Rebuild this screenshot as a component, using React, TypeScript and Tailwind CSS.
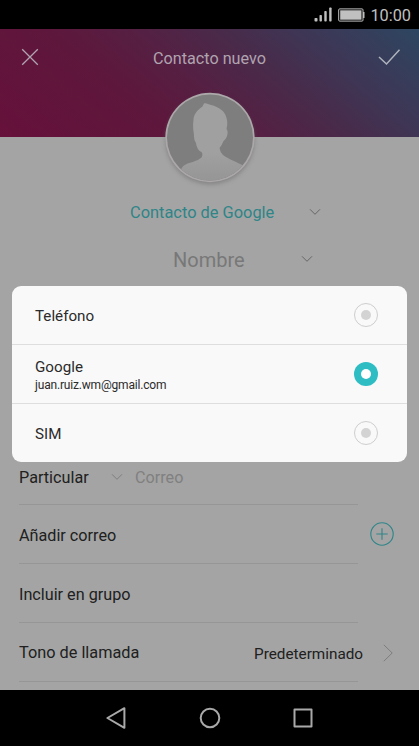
import React from "react";

function Chevron({ className = "" }: { className?: string }) {
  return (
    <svg className={className} width="12" height="8" viewBox="0 0 12 8" fill="none" stroke="currentColor" strokeWidth="1">
      <path d="M1 1.3 6 6.3l5-5" />
    </svg>
  );
}

function StatusBar() {
  return (
    <div className="flex h-[29px] shrink-0 items-center justify-end bg-black pr-2 text-[#c0c0c0]">
      <svg width="18" height="15" viewBox="0 0 18 15" fill="currentColor" className="mr-[6px]">
        <rect x="0.5" y="11" width="3" height="3.5" rx=".8" />
        <rect x="5.5" y="8" width="2.4" height="6.5" rx=".8" />
        <rect x="10.3" y="4" width="2.4" height="10.5" rx=".8" />
        <rect x="15.2" y="0.5" width="2.4" height="14" rx=".8" />
      </svg>
      <svg width="27" height="14" viewBox="0 0 27 14" className="mr-[5px]">
        <rect x="0.7" y="0.9" width="24.3" height="12.2" rx="1" fill="none" stroke="#c0c0c0" strokeWidth="1" />
        <rect x="2.2" y="2.3" width="21.3" height="9.4" fill="#c0c0c0" />
        <path d="M25 4h1.5v6H25z" fill="#c0c0c0" />
      </svg>
      <span className="pt-[2px] text-[16.300px] leading-5">10:00</span>
    </div>
  );
}

function Avatar() {
  return (
    <svg width="104" height="104" viewBox="0 0 104 104" className="absolute top-[56px] left-[158px]">
      <defs>
        <clipPath id="face"><circle cx="52" cy="52.5" r="43" /></clipPath>
        <filter id="shade" x="-20%" y="-20%" width="140%" height="140%"><feGaussianBlur stdDeviation="2.2" /></filter>
        <linearGradient id="person" x1="0" y1="0" x2="0" y2="1">
          <stop offset=".6" stopColor="#a0a0a0" /><stop offset="1" stopColor="#949494" />
        </linearGradient>
      </defs>
      <circle cx="52" cy="55" r="44.5" fill="#666" opacity=".5" filter="url(#shade)" />
      <circle cx="52" cy="52.5" r="44.7" fill="#aca8aa" />
      <circle cx="52" cy="52.5" r="43" fill="#7e7e7e" />
      <path clipPath="url(#face)" fill="url(#person)" d="M23 84.5C25 80 28 79 33 77.500C38 76 43 74 44 71.500Q45 69 43.500 67C40.500 66 38.500 62 38 58Q35.500 54 36 50Q34.500 42 35.500 35C35.500 30 39 25 44.500 21.500L46 18.500C48 17.500 50 19 53 20C61 22 67 26 68.500 33Q70 38 68.500 44Q70.500 46 69 51C68 54 66.500 55 65.500 56Q64 60 61.500 63Q62 67 65 70C70 74 79 77 86 81V100H23Z" />
    </svg>
  );
}

function Header() {
  return (
    <header className="relative z-10 flex h-[108px] shrink-0 items-start justify-between bg-[linear-gradient(40deg,#66113b_0%,#5e173c_32%,#552043_48%,#4a2949_62%,#3e3655_78%,#2d4661_100%)] text-[#b0a4b0]">
      <svg width="18" height="18" viewBox="0 0 18 18" fill="none" stroke="currentColor" strokeWidth="1.3" className="mt-[19px] ml-[21px]">
        <path d="m1.200 1.200 15.600 15.600M16.800 1.200 1.200 16.800" />
      </svg>
      <h1 className="mt-[18px] ml-[2px] text-[16.200px] leading-6">Contacto nuevo</h1>
      <svg width="23" height="18" viewBox="0 0 23 18" fill="none" stroke="#b0b4bc" strokeWidth="1.5" className="mt-[20px] mr-[18px]">
        <path d="m1 8 7.500 7L21.500.8" />
      </svg>
      <Avatar />
    </header>
  );
}

function FormRow({ children }: { children: React.ReactNode }) {
  return (
    <div className="flex h-[59px] w-[339px] shrink-0 items-center border-b border-[#969696]">{children}</div>
  );
}

function Option({ title, detail, selected = false }: { title: string; detail?: string; selected?: boolean }) {
  return (
    <div className="flex flex-1 items-center justify-between border-b border-[#dedede] pr-[29.500px] pl-[23px] last:border-b-0">
      <div className="pt-[2px]">
        <div className="text-[15.200px] leading-5 text-[#2b2b2b]">{title}</div>
        {detail && <div className="text-[12px] leading-4 tracking-[-0.18px] text-[#2b2b2b]">{detail}</div>}
      </div>
      <div className={selected ? "flex size-6 items-center justify-center rounded-full bg-[#2dbdc3]" : "flex size-6 items-center justify-center rounded-full border border-[#cecece]"}>
        <span className={selected ? "size-[10px] rounded-full bg-white" : "size-[10px] rounded-full bg-[#d3d3d3]"} />
      </div>
    </div>
  );
}

export default function App() {
  return (
    <div className="relative flex h-[746px] w-[419px] flex-col overflow-hidden bg-[#a4a4a4] font-[Roboto,sans-serif] text-[#202020]">
      <StatusBar />
      <Header />
      <main className="flex min-h-0 flex-1 flex-col overflow-hidden">
        <div className="mt-[63px] flex h-6 shrink-0 items-center pl-[130px] text-[16.400px] text-[#2e8588]">
          <span className="w-[179px] pt-[2px]">Contacto de Google</span>
          <Chevron className="text-[#666]" />
        </div>
        <div className="mt-[21px] flex h-7 shrink-0 items-center pl-[173px] text-[20px] text-[#787878]">
          <span className="w-[128px] pt-px">Nombre</span>
          <Chevron className="text-[#666]" />
        </div>
        <div className="mt-[173px] flex shrink-0 flex-col pl-[19px] text-[16.200px]">
          <FormRow>
            <span className="w-[92px] pt-[7px]">Particular</span>
            <Chevron className="mt-1 text-[#7e7e7e]" />
            <span className="ml-[12px] pt-[7px] text-[#808080]">Correo</span>
          </FormRow>
          <div className="flex items-center">
            <FormRow><span className="pt-[4px]">Añadir correo</span></FormRow>
            <svg width="24" height="24" viewBox="0 0 24 24" fill="none" stroke="#2e8588" strokeWidth="1.1" className="mb-px ml-3">
              <circle cx="12" cy="12" r="11.200" /><path d="M6.300 12h11.400M12 6.300v11.400" />
            </svg>
          </div>
          <FormRow><span className="pt-[4px]">Incluir en grupo</span></FormRow>
          <div className="flex items-center">
            <FormRow>
              <span className="w-[235px] shrink-0 pt-[2px] text-[16.300px]">Tono de llamada</span>
              <span className="shrink-0 pt-[5px] text-[15.300px]">Predeterminado</span>
            </FormRow>
            <svg width="10" height="18" viewBox="0 0 10 18" fill="none" stroke="#7e7e7e" strokeWidth="1" className="ml-[24.500px]"><path d="m.8.8 8.400 8.200-8.400 8.200" /></svg>
          </div>
        </div>
      </main>
      <nav className="flex h-[56px] shrink-0 items-center justify-center gap-[72.500px] bg-black text-[#a9a9a9]">
        <svg width="20" height="22" viewBox="0 0 20 22" fill="none" stroke="currentColor" strokeWidth="2" strokeLinejoin="round"><path d="M18.400 1.200v19.600L1.400 11Z" /></svg>
        <svg width="22" height="22" viewBox="0 0 22 22" fill="none" stroke="currentColor" strokeWidth="2"><circle cx="11" cy="11" r="9.300" /></svg>
        <svg width="20" height="20" viewBox="0 0 20 20" fill="none" stroke="currentColor" strokeWidth="2" strokeLinejoin="round"><path d="M1.500 1.500h17v17h-17z" /></svg>
      </nav>
      <div role="dialog" className="absolute top-[286px] left-3 z-20 flex h-[176px] w-[395px] flex-col rounded-[9px] bg-[#f9f9f9]">
        <Option title="Teléfono" />
        <Option title="Google" detail="juan.ruiz.wm@gmail.com" selected />
        <Option title="SIM" />
      </div>
    </div>
  );
}
